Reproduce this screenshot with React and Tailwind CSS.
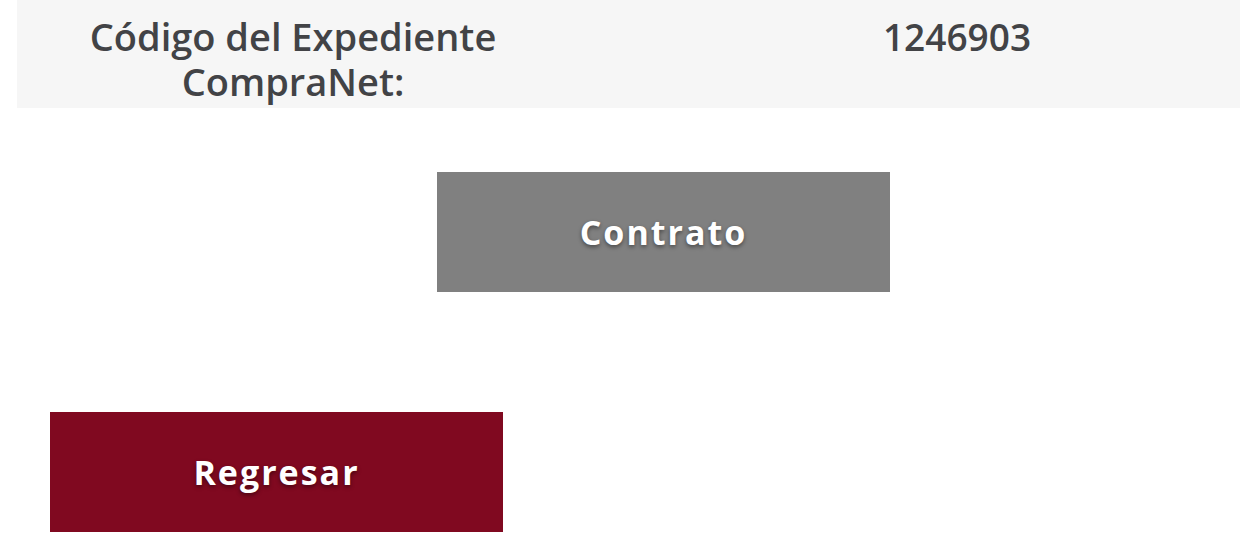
export default function App() {
  return (
    <div className="min-h-[554px] bg-white font-['Open_Sans',sans-serif]">
      {/* Info row */}
      <div className="ml-[17px] h-[108px] bg-[#f6f6f6] flex text-[#424346] font-semibold">
        <div className="w-[552px] shrink-0 text-center text-[38px] leading-[45px] pt-[14px]">
          Código del Expediente
          <br />
          CompraNet:
        </div>
        <div className="ml-[105px] flex-1 text-center text-[37px] leading-[45px] pt-[14px]">
          1246903
        </div>
      </div>

      {/* Contrato */}
      <div className="mt-[64px] ml-[437px]">
        <button className="w-[453px] h-[120px] bg-[#808080] text-white font-bold text-[34px] tracking-[2px] [text-shadow:0_2px_4px_rgba(0,0,0,0.45)]">
          Contrato
        </button>
      </div>

      {/* Regresar */}
      <div className="mt-[120px] ml-[50px]">
        <button className="w-[453px] h-[120px] bg-[#800920] text-white font-bold text-[34px] tracking-[2px] [text-shadow:0_2px_4px_rgba(0,0,0,0.45)]">
          Regresar
        </button>
      </div>
    </div>
  );
}
